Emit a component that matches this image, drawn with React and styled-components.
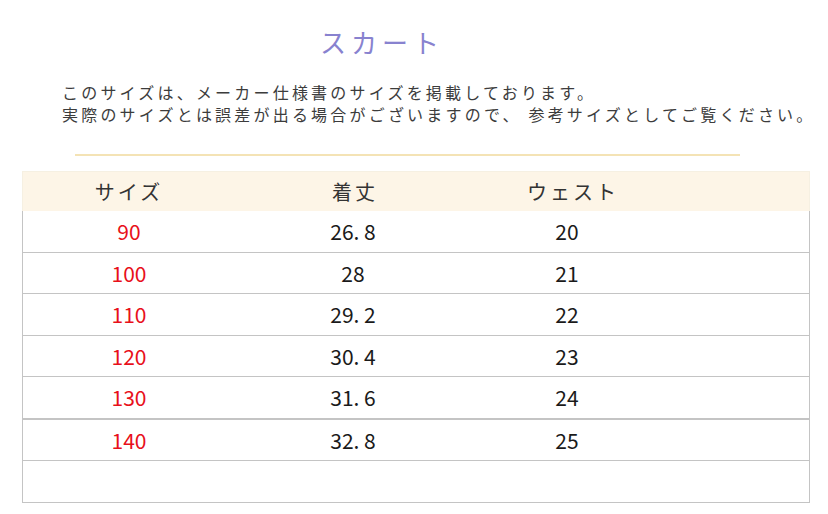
import React from 'react'
import styled, { createGlobalStyle } from 'styled-components'

const GlobalStyle = createGlobalStyle`
  html, body {
    margin: 0;
    padding: 0;
    background: #fff;
  }
  body {
    font-family: "Noto Sans CJK JP", "Noto Sans", sans-serif;
  }
`

const Page = styled.div`
  width: 828px;
  height: 514px;
  overflow: hidden;
  padding-top: 26px;
  box-sizing: border-box;
`

const Title = styled.h1`
  margin: 0 0 0 320px;
  font-size: 26px;
  font-weight: 400;
  letter-spacing: 5px;
  line-height: 32px;
  color: #8882cf;
`

const Notice = styled.div`
  margin: 23px 0 0 62px;
  font-size: 16px;
  line-height: 22px;
  letter-spacing: 3.2px;
  color: #3c3c3c;
  white-space: nowrap;
`

const Divider = styled.div`
  margin: 29px 0 0 75px;
  width: 665px;
  height: 2px;
  background: #f4e3b5;
`

const Table = styled.div`
  margin: 15px 0 0 22px;
  width: 788px;
  border-top: 1px solid #f6f0e2;
`

const Row = styled.div`
  display: grid;
  grid-template-columns: 212px 240px 196px 1fr;
  align-items: center;
  height: ${(p) => (p.$head ? '39px' : '40.5px')};
  background: ${(p) => (p.$head ? '#fdf5e7' : '#fff')};
  border-left: 1px solid ${(p) => (p.$head ? '#f6f0e2' : '#c4c4c4')};
  border-right: 1px solid ${(p) => (p.$head ? '#f6f0e2' : '#c4c4c4')};
  border-bottom: ${(p) => (p.$head ? '0' : p.$thick ? '2px' : '1px')} solid #c4c4c4;
`

const HeadCell = styled.div`
  text-align: center;
  font-size: 20px;
  letter-spacing: 3px;
  color: #333;
`

const Cell = styled.div`
  text-align: center;
  font-family: "Noto Sans CJK JP", "Noto Sans", sans-serif;
  font-size: 21px;
  font-weight: 400;
  padding-right: ${(p) => p.$nudge || 0}px;
  color: ${(p) => (p.$red ? '#e8101a' : '#1a1a1a')};
`

const rows = [
  ['90', '26. 8', '20'],
  ['100', '28', '21'],
  ['110', '29. 2', '22'],
  ['120', '30. 4', '23'],
  ['130', '31. 6', '24'],
  ['140', '32. 8', '25'],
]

export default function App() {
  return (
    <Page>
      <GlobalStyle />
      <Title>スカート</Title>
      <Notice>
        このサイズは、メーカー仕様書のサイズを掲載しております。
        <br />
        実際のサイズとは誤差が出る場合がございますので、 参考サイズとしてご覧ください。
      </Notice>
      <Divider />
      <Table>
        <Row $head>
          <HeadCell>サイズ</HeadCell>
          <HeadCell>着丈</HeadCell>
          <HeadCell>ウェスト</HeadCell>
          <div />
        </Row>
        {rows.map((r, i) => (
          <Row key={r[0]} $thick={i === 4}>
            <Cell $red>{r[0]}</Cell>
            <Cell $nudge={4}>{r[1]}</Cell>
            <Cell $nudge={12}>{r[2]}</Cell>
            <div />
          </Row>
        ))}
        <Row>
          <div />
          <div />
          <div />
          <div />
        </Row>
      </Table>
    </Page>
  )
}
